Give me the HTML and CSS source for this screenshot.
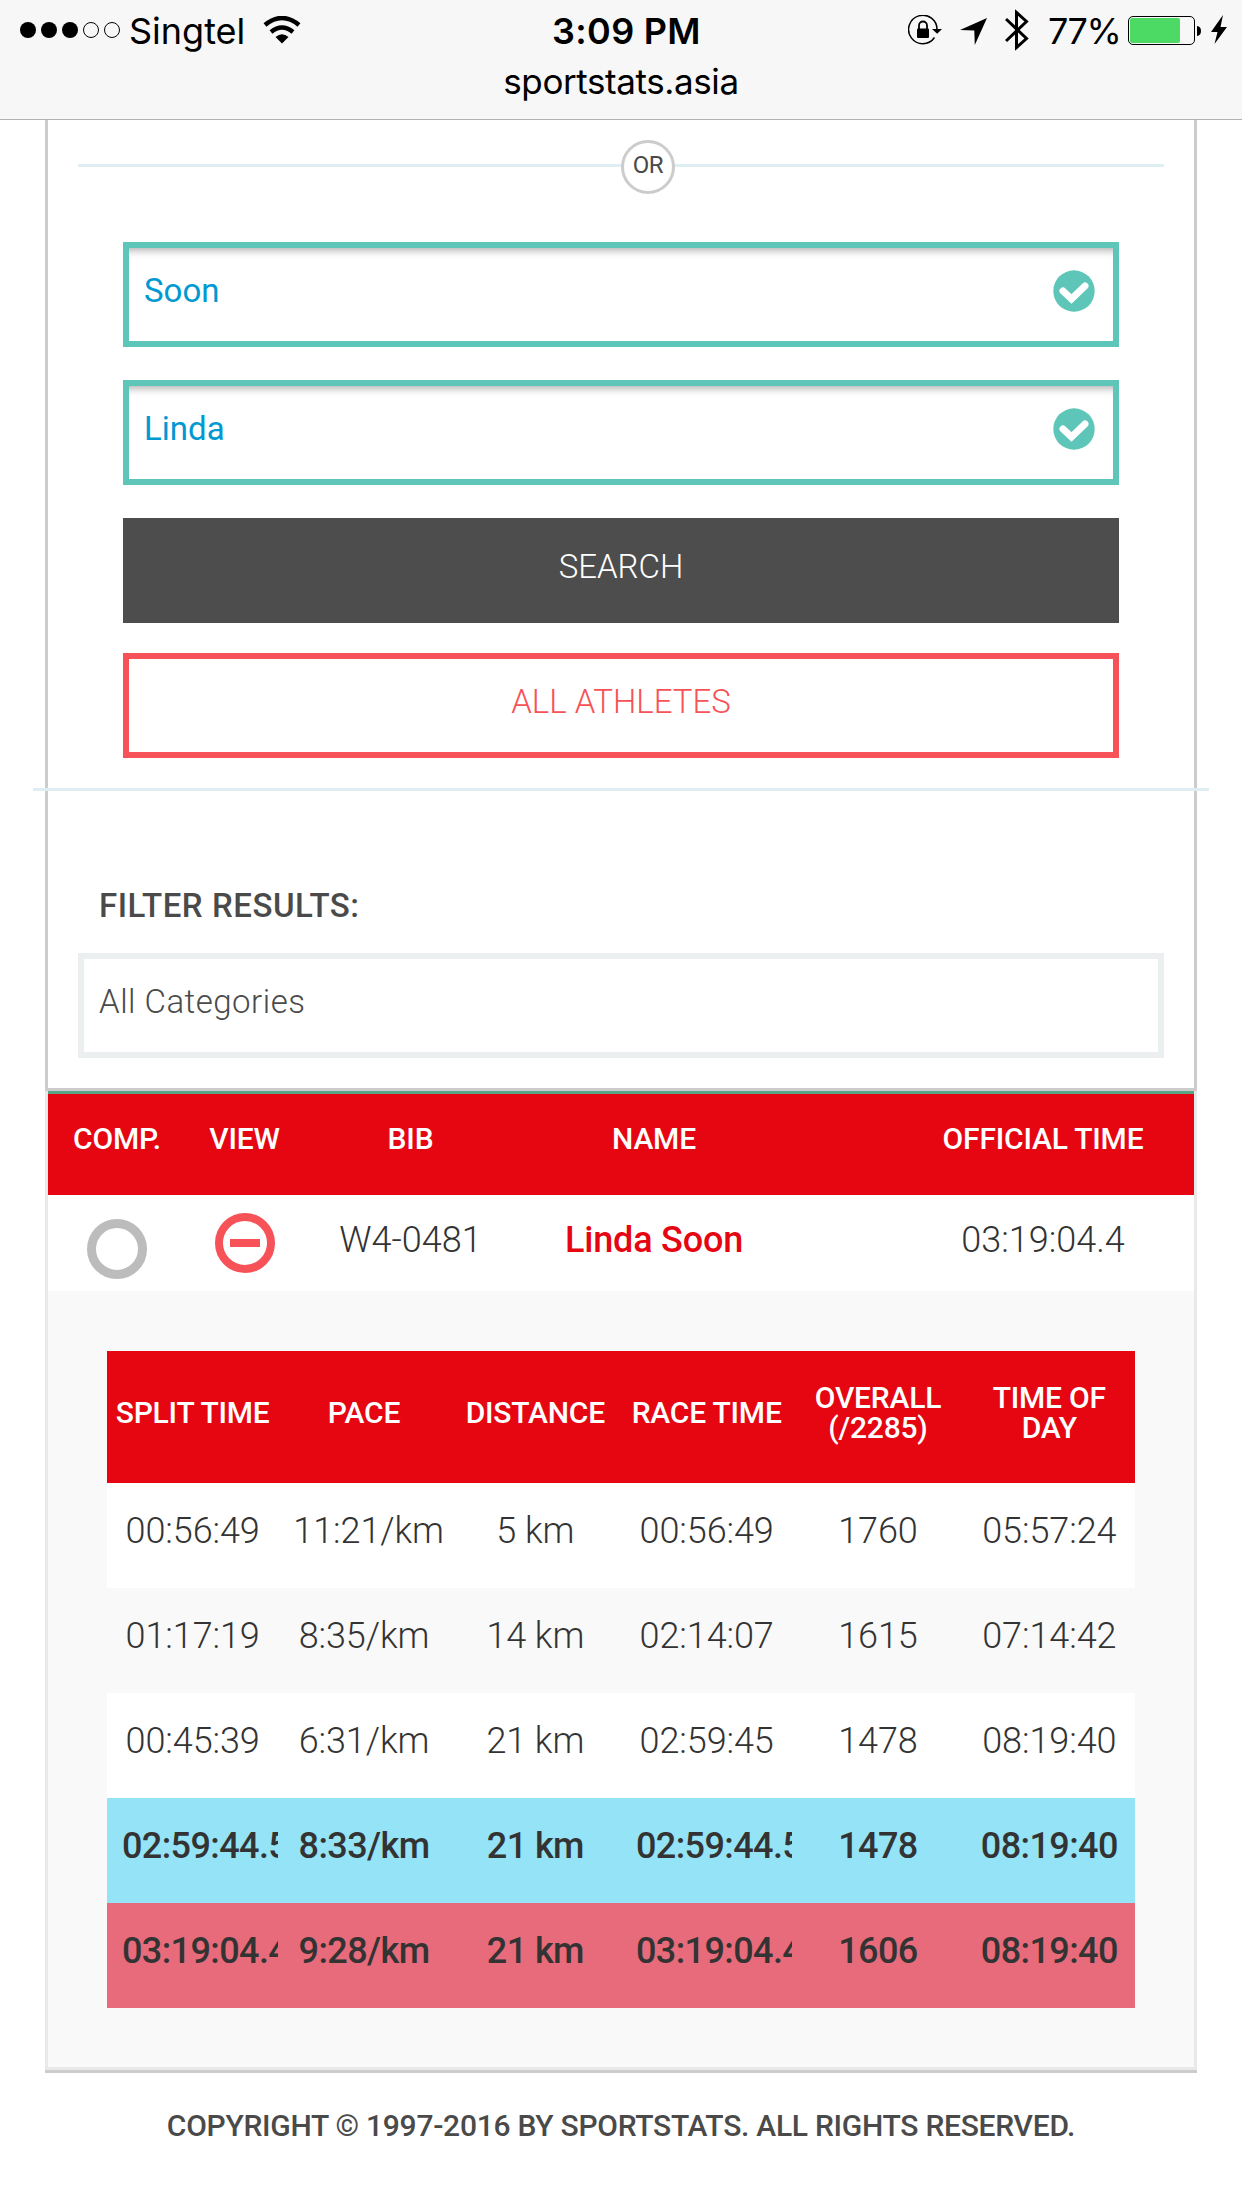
FILE: index.html
```html
<!DOCTYPE html>
<html lang="en">

<head>
    <meta charset="UTF-8">
    <title>Sportstats</title>
    <link rel="stylesheet" href="styles.css">
</head>

<body>
    <div class="topbar">
        <div class="status">
            <div class="status-left">
                <svg class="signal" width="100" height="16" viewBox="0 0 100 16">
                    <circle cx="8" cy="8" r="8" />
                    <circle cx="29" cy="8" r="8" />
                    <circle cx="50" cy="8" r="8" />
                    <circle class="off" cx="71" cy="8" r="7.5" />
                    <circle class="off" cx="92" cy="8" r="7.5" />
                </svg>
                <span class="carrier">Singtel</span>
                <svg class="wifi" width="38" height="28" viewBox="0 0 38 28">
                    <path class="arc" d="M2 9 Q19 -5 36 9" />
                    <path class="arc" d="M8 16 Q19 7 30 16" />
                    <path d="M12.5 21 Q19 15.5 25.5 21 L19 27.5 Z" />
                </svg>
            </div>
            <div class="clock">3:09 PM</div>
            <div class="status-right">
                <svg class="lock" width="34" height="30" viewBox="0 0 34 30">
                    <path class="ring" d="M26.5 22.5 A14.2 14.2 0 1 1 29 15" />
                    <path d="M24 14 H34 L29.2 18.8 Z" />
                    <rect x="9" y="13.5" width="12" height="9.5" rx="1" />
                    <path class="shackle" d="M11 14 V10.5 A4 4 0 0 1 19 10.5 V14" />
                </svg>
                <svg class="arrow" width="27" height="27" viewBox="0 0 27 27">
                    <path d="M0 12 L27 0 L14.8 27 L14.3 12.6 Z" />
                </svg>
                <svg class="bluetooth" width="24" height="42" viewBox="0 0 24 42">
                    <path d="M1 10 L21.5 29.5 L11.5 38.5 V3.5 L21.5 12.5 L1 32" />
                </svg>
                <span class="percent">77%</span>
                <svg class="battery" width="73" height="29" viewBox="0 0 73 29">
                    <rect class="shell" x="0.5" y="0.5" width="66" height="28" rx="4.5" />
                    <rect class="level" x="2" y="2" width="50" height="25" rx="2" />
                    <path d="M69 10 Q73 10.5 73 15 Q73 19.5 69 20 Z" />
                </svg>
                <svg class="bolt" width="16" height="29" viewBox="0 0 16 29">
                    <path d="M12 0 L0 17 H6.5 L3.5 29 L16 12 H9.5 Z" />
                </svg>
            </div>
        </div>
        <div class="url">sportstats.asia</div>
    </div>

    <div class="panel">
        <div class="or"><span>OR</span></div>
        <div class="form">
            <div class="input">
                <span>Soon</span>
                <svg width="42" height="42" viewBox="0 0 42 42">
                    <circle cx="21" cy="21" r="20.7" />
                    <path d="M10 21 L18.5 29 L32 16" />
                </svg>
            </div>
            <div class="input">
                <span>Linda</span>
                <svg width="42" height="42" viewBox="0 0 42 42">
                    <circle cx="21" cy="21" r="20.7" />
                    <path d="M10 21 L18.5 29 L32 16" />
                </svg>
            </div>
            <div class="btn search">SEARCH</div>
            <div class="btn all">ALL ATHLETES</div>
        </div>
        <div class="line"></div>
        <div class="filter">
            <h3>FILTER RESULTS:</h3>
            <div class="select">All Categories</div>
        </div>
    </div>

    <div class="results">
        <div class="row head">
            <div>COMP.</div>
            <div>VIEW</div>
            <div>BIB</div>
            <div>NAME</div>
            <div class="official">OFFICIAL TIME</div>
        </div>
        <div class="row athlete">
            <div class="comp"><i></i></div>
            <div class="view"><i></i></div>
            <div class="bib">W4-0481</div>
            <div class="name">Linda Soon</div>
            <div class="official">03:19:04.4</div>
        </div>
        <div class="detail">
            <table class="splits">
                <tr>
                    <th>SPLIT TIME</th>
                    <th>PACE</th>
                    <th>DISTANCE</th>
                    <th>RACE TIME</th>
                    <th>OVERALL (/2285)</th>
                    <th>TIME OF DAY</th>
                </tr>
                <tr>
                    <td>00:56:49</td>
                    <td>11:21/km</td>
                    <td>5 km</td>
                    <td>00:56:49</td>
                    <td>1760</td>
                    <td>05:57:24</td>
                </tr>
                <tr class="even">
                    <td>01:17:19</td>
                    <td>8:35/km</td>
                    <td>14 km</td>
                    <td>02:14:07</td>
                    <td>1615</td>
                    <td>07:14:42</td>
                </tr>
                <tr>
                    <td>00:45:39</td>
                    <td>6:31/km</td>
                    <td>21 km</td>
                    <td>02:59:45</td>
                    <td>1478</td>
                    <td>08:19:40</td>
                </tr>
                <tr class="blue">
                    <td>02:59:44.5</td>
                    <td>8:33/km</td>
                    <td>21 km</td>
                    <td>02:59:44.5</td>
                    <td>1478</td>
                    <td>08:19:40</td>
                </tr>
                <tr class="pink">
                    <td>03:19:04.4</td>
                    <td>9:28/km</td>
                    <td>21 km</td>
                    <td>03:19:04.4</td>
                    <td>1606</td>
                    <td>08:19:40</td>
                </tr>
            </table>
        </div>
    </div>

    <div class="footer">COPYRIGHT © 1997-2016 BY SPORTSTATS. ALL RIGHTS RESERVED.</div>
</body>

</html>
```

FILE: styles.css
```css
* {
    margin: 0;
    padding: 0;
    box-sizing: border-box;
}

body {
    background: #fff;
    color: #4a4a4a;
    font-family: Roboto, "Liberation Sans", sans-serif;
    font-weight: 300;
}

svg {
    display: block;
}

/* status bar */
.topbar {
    height: 120px;
    background: #f7f7f7;
    border-bottom: 1px solid #b2b2b2;
    color: #000;
    font-family: Inter, "Liberation Sans", sans-serif;
    font-weight: 400;
    font-size: 36px;
}

.status {
    display: flex;
    height: 62px;
    line-height: 62px;
}

.status-left,
.status-right {
    flex: 1;
    display: flex;
}

.status-left {
    padding-left: 20px;
}

.status-right {
    justify-content: flex-end;
    padding-right: 15px;
}

.signal {
    margin-top: 22px;
}

.signal .off {
    fill: none;
    stroke: #000;
}

.carrier {
    width: 134px;
    padding-left: 9px;
}

.wifi {
    margin: 16px 0 0 9px;
}

.wifi .arc {
    fill: none;
    stroke: #000;
    stroke-width: 4.5;
}

.clock {
    width: 160px;
    padding-left: 6px;
    text-align: center;
    font-weight: 600;
    letter-spacing: 0.3px;
    white-space: nowrap;
}

.lock {
    margin: 15px 18px 0 0;
}

.lock .ring {
    fill: none;
    stroke: #000;
    stroke-width: 1.5;
}

.lock .shackle {
    fill: none;
    stroke: #000;
    stroke-width: 1.8;
}

.arrow {
    margin: 18px 18px 0 0;
}

.bluetooth {
    margin: 9px 18px 0 0;
    fill: none;
    stroke: #000;
    stroke-width: 3;
}

.percent {
    width: 80px;
    margin-left: 1px;
    letter-spacing: -1.5px;
}

.battery {
    margin: 16px 10px 0 0;
}

.battery .shell {
    fill: none;
    stroke: #000;
}

.battery .level {
    fill: #4cd964;
}

.bolt {
    margin-top: 15px;
}

.url {
    height: 38px;
    font-size: 35px;
    line-height: 38px;
    letter-spacing: -0.4px;
    text-align: center;
}

/* search panel */
.panel {
    width: 1152px;
    height: 971px;
    margin: 0 auto;
    padding-top: 20px;
    border: 3px solid #ccc;
    border-top: 0;
}

.or {
    height: 54px;
    margin: 0 30px;
    background: linear-gradient(#deeef2, #deeef2) 0 24px / 100% 3px no-repeat;
    padding-left: 543px;
}

.or span {
    display: block;
    width: 54px;
    height: 54px;
    border: 3px solid #ccc;
    border-radius: 50%;
    background: #fff;
    font-size: 24px;
    font-weight: 400;
    line-height: 44px;
    letter-spacing: -0.5px;
    text-align: center;
}

.form {
    margin: 48px 75px 0;
}

.input,
.btn,
.select {
    height: 105px;
    border: 6px solid;
    font-size: 33px;
    line-height: 86px;
}

.input {
    display: flex;
    justify-content: space-between;
    margin-bottom: 33px;
    padding: 0 18px 0 15px;
    border-color: #5ec6b8;
    box-shadow: inset 0 9px 9px -7px rgba(0, 0, 0, 0.35);
    color: #0099d2;
    font-weight: 400;
}

.input svg {
    margin-top: 22px;
    fill: #5ec6b8;
}

.input path {
    fill: none;
    stroke: #fff;
    stroke-width: 7;
    stroke-linecap: round;
}

.btn {
    text-align: center;
}

.search {
    margin-bottom: 30px;
    border-color: #4d4d4d;
    background: #4d4d4d;
    color: #fff;
}

.all {
    border-color: #f75257;
    color: #f75257;
}

.line {
    height: 3px;
    margin: 30px -15px 0;
    background: #deeef2;
}

.filter {
    margin: 0 30px;
}

.filter h3 {
    padding: 95px 0 27px 21px;
    font-size: 33px;
    font-weight: 500;
    line-height: 40px;
    letter-spacing: 0.55px;
}

.select {
    padding-left: 15px;
    border-color: #ebeff0;
    letter-spacing: 0.5px;
}

/* results */
.results {
    width: 1152px;
    height: 979px;
    margin: 0 auto;
    border: 3px solid #e9e9e9;
    border-top: 0;
    box-shadow: 0 3px 0 #ccc;
    background: #f9f9f9;
}

.row {
    display: grid;
    grid-template-columns: 138px 117px 215px 272px 404px;
    text-align: center;
}

.official {
    padding-left: 102px;
}

.head {
    height: 104px;
    border-top: 3px solid #5aa586;
    background: #e50612;
    color: #fff;
    font-size: 30px;
    font-weight: 500;
    line-height: 90px;
    letter-spacing: -0.2px;
}

.athlete {
    height: 96px;
    background: #fff;
    color: #333;
    font-size: 36px;
    line-height: 91px;
}

.name {
    color: #e50612;
    font-weight: 500;
    letter-spacing: -0.2px;
}

.comp i,
.view i {
    display: block;
    width: 60px;
    height: 60px;
    border-radius: 50%;
}

.comp i {
    margin: 24px 0 0 39px;
    border: 9px solid #bcbcbc;
}

.view i {
    margin: 18px 0 0 29px;
    border: 8px solid #f75257;
    background: linear-gradient(#f75257, #f75257) center / 30px 8px no-repeat;
}

.detail {
    padding: 60px 59px 0;
}

.splits {
    width: 1028px;
    table-layout: fixed;
    border-collapse: collapse;
    background: #fff;
    color: #333;
    text-align: center;
}

.splits th {
    height: 132px;
    padding-bottom: 9px;
    background: #e50612;
    color: #fff;
    font-size: 30px;
    font-weight: 500;
    line-height: 30px;
    letter-spacing: -0.2px;
}

.splits td {
    height: 105px;
    padding: 0 15px 9px;
    overflow: hidden;
    font-size: 36px;
    line-height: 40px;
    letter-spacing: -0.1px;
    white-space: nowrap;
}

.splits .even {
    background: #f9f9f9;
}

.splits .blue {
    background: #95e3f7;
}

.splits .pink {
    background: #e76b7a;
}

.splits .blue td,
.splits .pink td {
    font-weight: 500;
    letter-spacing: -0.6px;
}

.footer {
    padding-top: 36px;
    color: #4a4a4a;
    font-size: 30px;
    font-weight: 500;
    line-height: 40px;
    letter-spacing: -0.27px;
    text-align: center;
}
```
